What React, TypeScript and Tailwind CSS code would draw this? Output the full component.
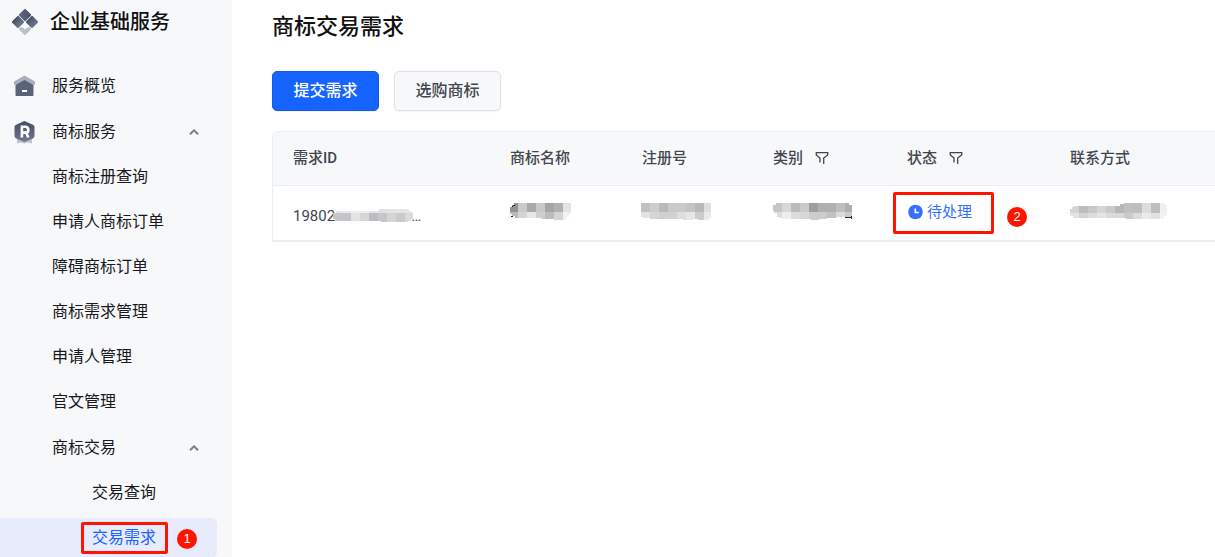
import React from "react";

type MosaicProps = { width: number; clip: string; rows: { y: number; h: number; x: number; colors: string[] }[]; ink?: string };

function Mosaic({ width, clip, rows, ink }: MosaicProps) {
  const id = React.useId();
  return (
    <svg width={width} height="19" viewBox={`0 0 ${width} 19`} aria-hidden="true" className="block shrink-0">
      <clipPath id={id}>
        <path d={clip} />
      </clipPath>
      <g clipPath={`url(#${id})`} shapeRendering="crispEdges">
        {rows.map((r) =>
          r.colors.map((c, i) => <rect key={`${r.y}-${i}`} x={r.x + i * 9} y={r.y} width="9" height={r.h} fill={c} />),
        )}
      </g>
      {ink && <path d={ink} fill="#222428" shapeRendering="crispEdges" />}
    </svg>
  );
}

function Logo() {
  return (
    <svg width="28" height="28" viewBox="0 0 28 28" aria-hidden="true">
      <defs>
        <linearGradient id="logo-top" x1="0" y1="1" x2="1" y2="0">
          <stop offset="0" stopColor="#606a80" />
          <stop offset="1" stopColor="#465065" />
        </linearGradient>
        <linearGradient id="logo-side" x1="0" y1="0" x2="1" y2="0">
          <stop offset="0" stopColor="#465065" />
          <stop offset="1" stopColor="#6f7a90" />
        </linearGradient>
      </defs>
      <rect x="9.500" y="16.500" width="9" height="9" rx="1" transform="rotate(45 14 21)" fill="#b9c0cb" />
      <path d="M14 13.800l4.300 4.400-1.800 2-1-.6L14 22l-1.500-2.400-1 .6-1.800-2z" fill="#fff" />
      <rect x="9.400" y="2.400" width="9.200" height="9.200" rx="1" transform="rotate(45 14 7)" fill="url(#logo-top)" />
      <rect x="2.400" y="9.400" width="9.200" height="9.200" rx="1" transform="rotate(45 7 14)" fill="url(#logo-side)" />
      <rect x="16.400" y="9.400" width="9.200" height="9.200" rx="1" transform="rotate(45 21 14)" fill="url(#logo-side)" />
    </svg>
  );
}

function HomeIcon() {
  return (
    <svg width="22" height="22" viewBox="0 0 22 22" aria-hidden="true">
      <path d="M10.500 .5L.5 6.200c-.4.3-.5.600-.5 1v2.600h21V7.200c0-.4-.2-.8-.5-1z" fill="#a9b0ba" />
      <path d="M1.500 10L10.500 5l9 5v10c0 .7-.4 1-1 1h-16c-.6 0-1-.3-1-1z" fill="#5b6477" />
      <path d="M8 15h5v2H8z" fill="#fff" />
    </svg>
  );
}

function BadgeIcon() {
  return (
    <svg width="22" height="24" viewBox="0 0 22 24" aria-hidden="true">
      <defs>
        <linearGradient id="badge-fill" x1="0" y1="0" x2="0" y2="1">
          <stop offset="0" stopColor="#424c62" />
          <stop offset="1" stopColor="#707b91" />
        </linearGradient>
      </defs>
      <path d="M3 16v7.500l4-1 3.500 1 3.500-1 4 1V16z" fill="#bcc3ce" />
      <path d="M10.500 1l7.800 3.400c1.400.7 2.200 1.400 2.200 2.700v9c0 1.200-.8 2-2.200 2.700L10.500 22l-7.800-3.200C1.300 18.100.5 17.300.5 16.100v-9c0-1.300.8-2 2.200-2.700z" fill="url(#badge-fill)" />
      <path d="M7.900 17.500V6.800h3.300c4 0 4 5.500 1 5.900L14.300 17.500M7.900 12.600h4" fill="none" stroke="#fff" strokeWidth="2.600" />
    </svg>
  );
}

function Chevron() {
  return (
    <svg width="10" height="6" viewBox="0 0 10 6" fill="none" stroke="#79808f" strokeWidth="2" aria-hidden="true">
      <path d="M1 5.300l4-4 4 4" />
    </svg>
  );
}

function Filter() {
  return (
    <button type="button" aria-label="筛选" className="flex">
      <svg width="14" height="14" viewBox="0 0 14 14" fill="none" stroke="#3f444d" strokeWidth="1.300" aria-hidden="true">
        <path d="M5 11.500V7L1.300 4V1.700h11.400V4L8.700 7v6" />
      </svg>
    </button>
  );
}

function Marker({ children }: { children: string }) {
  return (
    <span className="flex size-5 items-center justify-center rounded-full bg-[#ff1400] font-['Liberation_Sans',sans-serif] text-[13px] leading-5 text-white">
      {children}
    </span>
  );
}

const services = ["商标注册查询", "申请人商标订单", "障碍商标订单", "商标需求管理", "申请人管理", "官文管理"];
const row = "flex h-10 w-full items-center";
const headings = ["商标名称", "注册号"];

function Sidebar() {
  return (
    <aside className="w-[232px] shrink-0 bg-[#f7f8fa] text-base text-[#17191c]">
      <div className="flex h-11 items-center gap-[11px] pl-[11px] text-xl font-medium text-[#111]">
        <Logo />
        <span>企业基础服务</span>
      </div>
      <nav className="mt-[22px] flex flex-col gap-[5px] pr-[15px]">
        <a href="#overview" className={`${row} gap-4 pl-[14px]`}>
          <HomeIcon />
          服务概览
        </a>
        <button type="button" aria-expanded="true" className={`${row} mt-px gap-4 pr-[18px] pl-[14px] text-left`}>
          <BadgeIcon />
          <span className="flex-1">商标服务</span>
          <Chevron />
        </button>
        {services.map((s) => (
          <a key={s} href="#service" className={`${row} pl-[52px]`}>
            {s}
          </a>
        ))}
        <button type="button" aria-expanded="true" className={`${row} mt-px pr-[18px] pl-[52px] text-left`}>
          <span className="flex-1">商标交易</span>
          <Chevron />
        </button>
        <a href="#query" className={`${row} pl-[92px]`}>
          交易查询
        </a>
        <a href="#demand" aria-current="page" className={`${row} relative rounded-r-md bg-[#e8ebfb] pl-[92px] text-[#1a62ff]`}>
          交易需求
          <span className="absolute top-1 left-[81px] h-8 w-[87px] rounded-[2px] border-3 border-[#ff1400]" />
          <span className="absolute top-[11px] left-[177px]">
            <Marker>1</Marker>
          </span>
        </a>
      </nav>
    </aside>
  );
}

export default function App() {
  return (
    <div className="flex h-screen overflow-hidden bg-white font-[Roboto,'Noto_Sans_CJK_SC',sans-serif]">
      <Sidebar />
      <main className="min-w-0 flex-1 pl-10">
        <h1 className="pt-[11px] text-[22px] leading-8 font-medium text-[#111]">商标交易需求</h1>
        <div className="mt-7 flex gap-[15px] text-base font-medium">
          <button type="button" className="h-10 w-[107px] rounded-[5px] border border-[#1459ec] bg-[#1664ff] text-white shadow-xs">
            提交需求
          </button>
          <button type="button" className="h-10 w-[107px] rounded-[5px] border border-[#dde2e9] bg-[#f7f8fa] text-[#42464e] shadow-xs">
            选购商标
          </button>
        </div>
        <div className="mt-5 overflow-hidden rounded-tl-md border-t border-l border-[#eaedf1]">
          <table className="w-full table-fixed border-collapse text-left text-[15px] text-[#42464e]">
            <colgroup>
              <col className="w-[217px]" />
              <col className="w-[132px]" />
              <col className="w-[131px]" />
              <col className="w-[134px]" />
              <col className="w-[163px]" />
              <col />
            </colgroup>
            <thead>
              <tr className="h-[53px] border-b border-[#eaedf1] bg-[#f7f8fa]">
                <th className="pl-5 font-medium">需求ID</th>
                {headings.map((h) => (
                  <th key={h} className="pl-5 font-medium">
                    {h}
                  </th>
                ))}
                <th className="pl-5 font-medium">
                  <span className="flex items-center gap-3">
                    类别
                    <Filter />
                  </span>
                </th>
                <th className="pl-5 font-medium">
                  <span className="flex items-center gap-3">
                    状态
                    <Filter />
                  </span>
                </th>
                <th className="pl-5 font-medium">联系方式</th>
              </tr>
            </thead>
            <tbody>
              <tr className="h-14 border-b-2 border-[#eaedf1]">
                <td className="pt-1.5 pl-5">
                  <div className="flex items-center leading-6">
                    <span>19802</span>
                    <div className="-mx-0.5">
                      <Mosaic
                        width={80}
                        clip="M3 5H46V3H76V5H79V7H80V13H78V15H75V16H48V15H2V13H0V7H3Z"
                        rows={[
                          { y: 3, h: 4, x: 0, colors: ["#e7e7e8", "#ececec", "#efefef", "#efefef", "#e8e8e9", "#e0e0e1", "#e3e3e4", "#e5e5e5", "#e6e6e6"] },
                          { y: 7, h: 9, x: 0, colors: ["#c8c8cb", "#c5c6c9", "#e3e3e3", "#d6d6d9", "#bdbdc1", "#c4c5c9", "#d4d5d7", "#c9cacc", "#dadadb"] },
                        ]}
                      />
                    </div>
                    <span>…</span>
                  </div>
                </td>
                <td className="pb-1 pl-5">
                  <Mosaic
                    width={61}
                    clip="M4 2H61V13H59V16H56V19H44V18H31V17H5V15H2V13H0V6H2V4H4Z"
                    rows={[
                      { y: 2, h: 9, x: -1, colors: ["#929292", "#cacaca", "#a7aaa9", "#c5c9c8", "#a5a5a5", "#b1b1b1", "#e3e3e3"] },
                      { y: 11, h: 8, x: -1, colors: ["#bababa", "#d5d5d5", "#e7e7e7", "#cfcfcf", "#bcbcbc", "#d4d4d4", "#f1f1f1"] },
                    ]}
                    ink="M3 4h2v1h-2zM2 5h1v1h-1zM1 15h2v1h-2z"
                  />
                </td>
                <td className="pb-1 pl-5">
                  <div className="-ml-px">
                    <Mosaic
                      width={70}
                      clip="M0 2H70V17H68V19H57V18H52V19H42V18H9V17H2V16H0Z"
                      rows={[
                        { y: 2, h: 9, x: 0, colors: ["#c1c1c1", "#cbcecd", "#b9b9b9", "#cacaca", "#cacaca", "#c4c4c4", "#b9b9b9", "#dedede"] },
                        { y: 11, h: 8, x: 0, colors: ["#e2e2e2", "#d5d5d5", "#cfcfcf", "#d1d1d1", "#dedede", "#e7e7e7", "#cccccc", "#e8ebea"] },
                      ]}
                    />
                  </div>
                </td>
                <td className="pb-1 pl-5">
                  <Mosaic
                    width={79}
                    clip="M3 2H76V4H79V16H64V17H54V18H46V19H38V18H10V17H7V16H4V12H1V10H0V4H3Z"
                    rows={[
                      { y: 2, h: 9, x: 0, colors: ["#c6c6c6", "#d8d8d8", "#b8bcbb", "#cacaca", "#9f9f9f", "#b0b0b0", "#b0b0b0", "#bebebe", "#aeaeae"] },
                      { y: 11, h: 8, x: 0, colors: ["#dddddd", "#eeeeee", "#dbdbdb", "#d7d7d7", "#cdcdcd", "#cccccc", "#c1c1c1", "#dadada", "#cacaca"] },
                    ]}
                    ink="M72 16h6v-1h1v3h-1v-1h-6z"
                  />
                </td>
                <td className="relative pb-0.5 pl-5">
                  <span className="flex items-center gap-1 text-[#3370ff]">
                    <svg width="16" height="16" viewBox="0 0 16 16" aria-hidden="true">
                      <circle cx="8.500" cy="8" r="7.300" fill="#3370ff" />
                      <path d="M8.300 4.500v4h3.500" fill="none" stroke="#fff" strokeWidth="1.600" />
                    </svg>
                    待处理
                  </span>
                  <span className="absolute top-1.5 left-1.5 h-[42px] w-[101px] rounded-[2px] border-3 border-[#ff1400]" />
                  <span className="absolute top-[21px] left-[120px]">
                    <Marker>2</Marker>
                  </span>
                </td>
                <td className="pb-1 pl-5">
                  <Mosaic
                    width={97}
                    clip="M4 5H50V3H54V2H95V4H97V15H94V18H56V17H3V15H0V8H2V6H4Z"
                    rows={[
                      { y: 2, h: 10, x: 0, colors: ["#d4d4d4", "#bcbcbc", "#c8c8c8", "#d5d5d5", "#cacaca", "#b7b7b7", "#c0c0c0", "#bcbfbe", "#dddddd", "#bdbfbe", "#f0f0f0"] },
                      { y: 12, h: 7, x: 0, colors: ["#e3e3e3", "#d2d4d3", "#dcdcdc", "#e5e5e5", "#dcdcdc", "#d9d9d9", "#cacaca", "#dcdcdc", "#eaeaea", "#e1e1e1", "#f2f2f2"] },
                    ]}
                  />
                </td>
              </tr>
            </tbody>
          </table>
        </div>
      </main>
    </div>
  );
}
